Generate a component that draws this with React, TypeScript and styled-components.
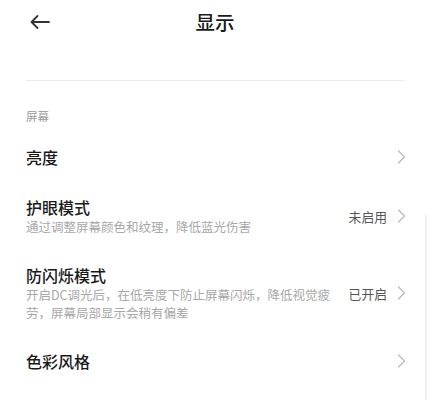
import React from 'react';
import styled, { createGlobalStyle } from 'styled-components';

const GlobalStyle = createGlobalStyle`
  html, body {
    margin: 0;
    padding: 0;
    background: #fff;
  }
  body {
    font-family: "Noto Sans CJK SC", "Noto Sans", sans-serif;
    -webkit-font-smoothing: antialiased;
  }
`;

interface Item {
  title: string;
  desc?: string;
  value?: string;
}

const items: Item[] = [
  { title: '亮度' },
  {
    title: '护眼模式',
    desc: '通过调整屏幕颜色和纹理，降低蓝光伤害',
    value: '未启用',
  },
  {
    title: '防闪烁模式',
    desc: '开启DC调光后，在低亮度下防止屏幕闪烁，降低视觉疲劳，屏幕局部显示会稍有偏差',
    value: '已开启',
  },
  { title: '色彩风格' },
];

const Page = styled.div`
  position: relative;
  width: 430px;
  height: 400px;
  overflow: hidden;
  background: #fff;
`;

const Header = styled.div`
  display: grid;
  grid-template-columns: 60px 1fr 60px;
  align-items: center;
  height: 44px;
`;

const BackButton = styled.div`
  display: flex;
  align-items: center;
  padding-left: 28px;
  color: #333;
`;

const Title = styled.div`
  text-align: center;
  font-size: 19.5px;
  font-weight: 500;
  color: #1a1a1a;
  line-height: 24px;
`;

const Divider = styled.div`
  height: 1px;
  margin: 36px 25px 0 26px;
  background: #ededed;
`;

const SectionLabel = styled.div`
  padding: 27px 26px 8px;
  font-size: 11.5px;
  line-height: 16px;
  color: #9a9a9a;
`;

const Row = styled.div`
  display: flex;
  align-items: center;
  padding: 14px 24px 14px 26px;
`;

const Texts = styled.div`
  flex: 1;
  min-width: 0;
  margin-right: 14px;
`;

const ItemTitle = styled.div`
  font-size: 16px;
  font-weight: 500;
  line-height: 22px;
  color: #1a1a1a;
`;

const ItemDesc = styled.div`
  font-size: 12.5px;
  line-height: 18px;
  color: #a8a8a8;
`;

const Value = styled.div`
  font-size: 12.8px;
  color: #555;
  margin-right: 10px;
  white-space: nowrap;
`;

const Chevron = styled.svg`
  flex: none;
  display: block;
`;

const ScrollThumb = styled.div`
  position: absolute;
  right: 3px;
  top: 215px;
  width: 2px;
  height: 185px;
  background: #efefef;
`;

function ArrowLeft() {
  return (
    <svg width="24" height="24" viewBox="0 0 24 24" fill="none">
      <path
        d="M21 12H3.5M9.5 6L3.5 12L9.5 18"
        stroke="currentColor"
        strokeWidth="1.8"
        strokeLinecap="round"
        strokeLinejoin="round"
      />
    </svg>
  );
}

function ChevronRight() {
  return (
    <Chevron width="9" height="14" viewBox="0 0 9 14" fill="none">
      <path
        d="M1.5 1L7.5 7L1.5 13"
        stroke="#b8b8b8"
        strokeWidth="1.2"
        strokeLinecap="round"
        strokeLinejoin="round"
      />
    </Chevron>
  );
}

export default function App() {
  return (
    <Page>
      <GlobalStyle />
      <Header>
        <BackButton>
          <ArrowLeft />
        </BackButton>
        <Title>显示</Title>
        <div />
      </Header>
      <Divider />
      <SectionLabel>屏幕</SectionLabel>
      {items.map((item) => (
        <Row key={item.title}>
          <Texts>
            <ItemTitle>{item.title}</ItemTitle>
            {item.desc && <ItemDesc>{item.desc}</ItemDesc>}
          </Texts>
          {item.value && <Value>{item.value}</Value>}
          <ChevronRight />
        </Row>
      ))}
      <ScrollThumb />
    </Page>
  );
}
